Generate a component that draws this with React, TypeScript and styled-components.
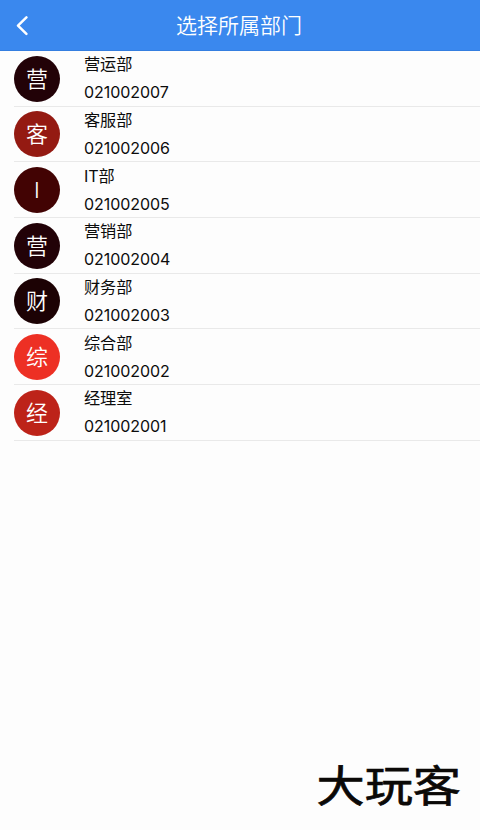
import React from "react";
import styled, { createGlobalStyle } from "styled-components";

const GlobalStyle = createGlobalStyle`
  * {
    box-sizing: border-box;
  }
  body {
    margin: 0;
    background-color: #fdfdfd;
  }
`
const Container = styled.div`
  display: flex;
  flex-direction: column;
  height: 100vh;
  overflow: hidden;
  color: #0c0c0c;
  font-family: Inter, "Noto Sans CJK SC", sans-serif;
`
const Header = styled.header`
  display: flex;
  align-items: center;
  flex: none;
  height: 51px;
  background-color: #3a88ee;
  border-bottom: 1px solid #347ee0;
  color: #fff;
`
const BackButton = styled.button`
  display: flex;
  width: 44px;
  padding: 1px 0 0 14px;
  border: none;
  background: none;
  color: inherit;
  cursor: pointer;
`
const Title = styled.h1`
  flex: 1;
  margin: 0;
  padding: 2px 46px 0 0;
  text-align: center;
  font-size: 21px;
  font-weight: 350;
  line-height: 50px;
`
const List = styled.ul`
  flex: 1;
  margin: 0;
  padding: 0 0 0 14px;
  list-style: none;
`
const Row = styled.li`
  display: flex;
  align-items: center;
  gap: 24px;
  height: 55.7px;
  border-bottom: 1.5px solid #e9e9e9;
`
const Avatar = styled.div<{ $color: string }>`
  flex: none;
  width: 46px;
  height: 46px;
  margin-top: 0.8px;
  border-radius: 50%;
  background-color: ${(props) => props.$color};
  color: #fff;
  font-size: 22px;
  font-weight: 350;
  line-height: 47px;
  text-align: center;
`
const Info = styled.div`
  display: flex;
  flex-direction: column;
  line-height: 28px;
`
const Name = styled.span`
  font-size: 16.2px;
  letter-spacing: -0.1px;
`
const Code = styled.span`
  font-size: 16px;
  letter-spacing: -0.05px;
`
const Brand = styled.footer`
  display: flex;
  justify-content: flex-end;
  flex: none;
  padding: 0 19px 22px 0;
`
const BrandName = styled.span`
  color: #0b0907;
  font-size: 43px;
  font-weight: 400;
  line-height: 44px;
  transform: scaleX(1.12);
  transform-origin: right center;
  -webkit-text-stroke: 0.7px #0b0907;
  stroke-linejoin: round;
`

interface Department {
  name: string;
  code: string;
  color: string;
}

const departments: Department[] = [
  { name: "营运部", code: "021002007", color: "#220207" },
  { name: "客服部", code: "021002006", color: "#941a12" },
  { name: "IT部", code: "021002005", color: "#420303" },
  { name: "营销部", code: "021002004", color: "#220207" },
  { name: "财务部", code: "021002003", color: "#1c0204" },
  { name: "综合部", code: "021002002", color: "#ed3024" },
  { name: "经理室", code: "021002001", color: "#bd2319" },
];

function App() {
  return (
    <Container>
      <GlobalStyle />
      <Header>
        <BackButton aria-label="返回">
          <svg width="15" height="20" viewBox="0 0 15 20" fill="none">
            <path
              d="M12.4 1.4 4 9.6l8.4 8.2"
              stroke="currentColor"
              strokeWidth="2.5"
              strokeLinecap="round"
              strokeLinejoin="round"
            />
          </svg>
        </BackButton>
        <Title>选择所属部门</Title>
      </Header>
      <List>
        {departments.map((item) => (
          <Row key={item.code}>
            <Avatar $color={item.color}>{item.name.charAt(0)}</Avatar>
            <Info>
              <Name>{item.name}</Name>
              <Code>{item.code}</Code>
            </Info>
          </Row>
        ))}
      </List>
      <Brand>
        <BrandName>大玩客</BrandName>
      </Brand>
    </Container>
  );
}

export default App;
